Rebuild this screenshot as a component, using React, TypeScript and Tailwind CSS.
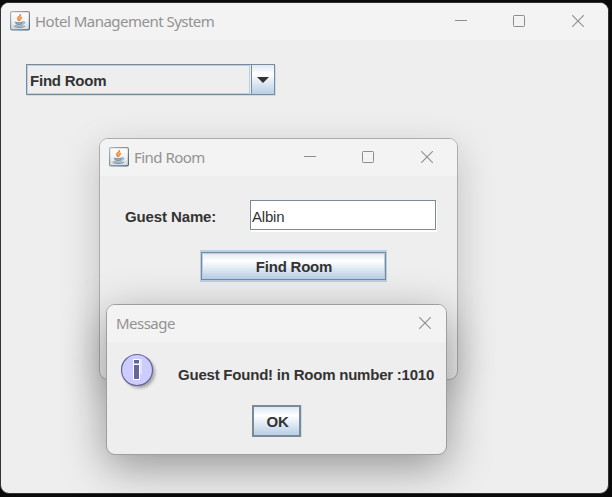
import type { ReactNode } from "react";

function JavaIcon() {
  return (
    <svg width="20" height="20" viewBox="0 0 20 20" className="shrink-0">
      <defs>
        <linearGradient id="tile" x1="0" y1="0" x2="0" y2="1">
          <stop offset="0" stopColor="#ffffff" />
          <stop offset="0.5" stopColor="#f3f3f3" />
          <stop offset="1" stopColor="#d3d9dd" />
        </linearGradient>
        <linearGradient id="edge" x1="0" y1="0" x2="1" y2="1">
          <stop offset="0" stopColor="#a9b6c1" />
          <stop offset="1" stopColor="#486378" />
        </linearGradient>
      </defs>
      <rect x="0.6" y="0.6" width="18.8" height="18.3" rx="1.4" fill="url(#tile)" stroke="url(#edge)" strokeWidth="1.2" />
      <path d="M9.4 9.8C6.8 7.9 7.7 6.6 9.4 5.6 10.6 4.9 10.6 4.2 10.2 3M10.2 9.8C9.2 8.2 10.2 7.2 12 6.4" fill="none" stroke="#ef8d3c" strokeWidth="1.7" />
      <path d="M4.6 10.4C6.6 11.3 11 11.3 13 10.4L12.4 13.3C10.8 14.2 7.6 14.2 6 13.3Z" fill="#6f91a8" />
      <path d="M6.8 12.1h4.6" stroke="#c3d2dc" strokeWidth="0.6" />
      <path d="M12.8 10.9C15.4 10.2 15.6 12.5 12.5 13.2" fill="none" stroke="#6f91a8" strokeWidth="1" />
      <path d="M3.7 14.7C3.8 16.9 12.9 17.1 15.2 14.9M5.2 14.3C7.5 15.5 11 15.3 12.8 14.5" fill="none" stroke="#6f8ea4" strokeWidth="1" />
    </svg>
  );
}

function CloseIcon() {
  return (
    <svg width="12" height="12" viewBox="0 0 12 12" className="shrink-0" fill="none" stroke="#8d8d8d" strokeWidth="1.1">
      <path d="M0.2 0.2 11.8 11.8M11.8 0.2 0.2 11.8" />
    </svg>
  );
}

function WindowControls() {
  return (
    <div className="-mt-px flex">
      <svg width="12" height="12" viewBox="0 0 12 12" className="mr-[46px]">
        <path d="M0 5.5h12" stroke="#8d8d8d" />
      </svg>
      <svg width="12" height="12" viewBox="0 0 12 12" className="mr-[47px]">
        <rect x="0.5" y="0.5" width="11" height="11" rx="0.8" fill="none" stroke="#8d8d8d" />
      </svg>
      <CloseIcon />
    </div>
  );
}

function Caption({ children }: { children: ReactNode }) {
  return (
    <span className="whitespace-nowrap font-['Noto_Sans',sans-serif] text-[15px] leading-5 tracking-[-0.52px] text-[#929292]">
      {children}
    </span>
  );
}

function InfoIcon() {
  return (
    <svg width="40" height="40" viewBox="0 0 40 40" className="shrink-0">
      <defs>
        <filter id="soft" x="-30%" y="-30%" width="160%" height="160%">
          <feGaussianBlur stdDeviation="1.5" />
        </filter>
      </defs>
      <circle cx="19.5" cy="19.5" r="15.5" fill="#8c8c8c" opacity="0.75" filter="url(#soft)" />
      <circle cx="17" cy="17" r="15.5" fill="#ccccff" stroke="#666699" strokeWidth="1.2" />
      <path d="M20 6h2v15h-2z" fill="#ffffff" opacity="0.45" />
      <path d="M13 6h7v21h-7z" fill="#ffffff" />
      <path d="M14 7h5v3.5h-5zM14 12h5v14h-5z" fill="#666699" />
    </svg>
  );
}

export default function App() {
  return (
    <div className="relative h-[497px] w-[612px] overflow-hidden bg-[#0b0a0b] pt-[2px] font-['Liberation_Sans',Arial,sans-serif] text-[15px] tracking-[-0.22px] text-[#333333]">
      <section className="h-[492px] w-[609px] overflow-hidden rounded-[9px] border border-[#333333] bg-[#eeeeee]">
        <header className="flex h-[37px] items-center justify-between bg-[#f3f3f3] pl-[9px] pr-[24px]">
          <div className="-mt-px flex items-center gap-[5px]">
            <JavaIcon />
            <Caption>Hotel Management System</Caption>
          </div>
          <WindowControls />
        </header>
        <div className="ml-[25px] mt-6 flex h-[31px] w-[249px] border border-[#7a8a99] font-bold shadow-[1px_1px_0_#cddbe8]">
          <div className="flex flex-1 items-center border border-[#b8cfe5] pl-[2px] pt-[3px]">
            <span>Find Room</span>
          </div>
          <div className="ml-px flex w-[23px] items-center justify-center border-l border-[#7a8a99] bg-linear-to-b from-[#dde8f3] via-white via-30% to-[#b8cfe5]">
            <svg width="12" height="6" viewBox="0 0 12 6"><path d="M0 0h12L6 6z" fill="#333333" /></svg>
          </div>
        </div>
      </section>

      <section className="absolute left-[99px] top-[138px] h-[242px] w-[359px] overflow-hidden rounded-[9px] border border-[#acacac] bg-[#eeeeee] shadow-[0_12px_38px_rgba(0,0,0,0.2)]">
        <header className="flex h-[37px] items-center justify-between bg-[#f3f3f3] pl-[9px] pr-[24px]">
          <div className="-mt-px flex items-center gap-[5px]">
            <JavaIcon />
            <Caption>Find Room</Caption>
          </div>
          <WindowControls />
        </header>
        <div className="mt-6 flex items-center pl-[25px]">
          <span className="w-[125px] pt-[4px] font-bold tracking-[-0.12px]">Guest Name:</span>
          <div className="flex h-[30px] w-[186px] items-center border border-[#7a8a99] bg-white pl-px pt-[5px] shadow-[1px_2px_0_white]">
            <span>Albin</span>
          </div>
        </div>
        <div className="ml-[100px] mt-5 flex h-8 w-[187px] border-x border-y-2 border-[#b8cfe5]">
          <div className="flex flex-1 items-center justify-center border border-[#7a8a99] bg-linear-to-b from-[#dde8f3] via-white via-30% to-[#b8cfe5] pl-px pt-[3px] font-bold shadow-[inset_0_0_0_1px_#b8cfe5]">
            Find Room
          </div>
        </div>
      </section>

      <section className="absolute left-[106px] top-[304px] h-[151px] w-[341px] overflow-hidden rounded-[9px] border border-[#9e9e9e] bg-[#eeeeee] shadow-[0_12px_44px_rgba(0,0,0,0.38)]">
        <header className="flex h-[37px] items-center justify-between bg-[#f3f3f3] pb-px pl-[9px] pr-[15px]">
          <Caption>Message</Caption>
          <CloseIcon />
        </header>
        <div className="flex items-start pl-[13px] pt-[11px]">
          <InfoIcon />
          <span className="ml-[18px] mt-[12px] whitespace-nowrap font-bold leading-5">Guest Found! in Room number :1010</span>
        </div>
        <div className="mt-[12px] flex justify-center">
          <button className="h-8 w-[49px] border-2 border-[#7a8a99] bg-linear-to-b from-[#dde8f3] via-white via-30% to-[#b8cfe5] pl-[2px] pt-[3px] font-bold shadow-[1px_0_0_#cddbe8]">OK</button>
        </div>
      </section>
    </div>
  );
}
